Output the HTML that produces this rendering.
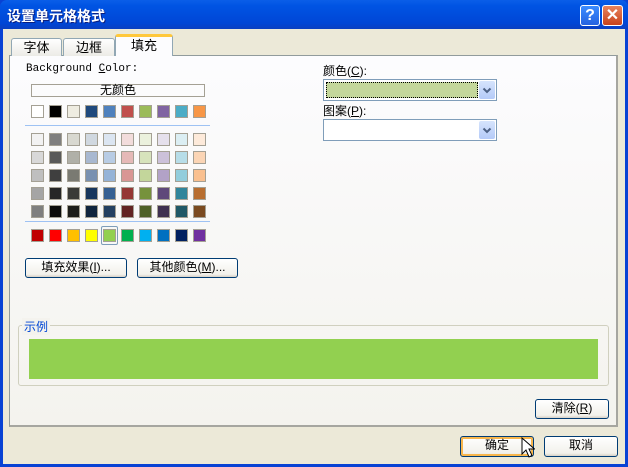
<!DOCTYPE html><html><head><meta charset="utf-8"><style>
*{margin:0;padding:0;box-sizing:border-box}
body{width:628px;height:467px;position:relative;overflow:hidden;font-family:"Liberation Sans","Noto Sans CJK SC","WenQuanYi Zen Hei",sans-serif;font-size:12px;color:#000;background:#0842d4}
.a{position:absolute}
.win{left:3px;top:29px;width:622px;height:435px;background:#ECE9D8}
.title{left:0;top:0;width:628px;height:29px;background:linear-gradient(#0a5ee8,#0054e3 20%,#0046d6 80%,#0a3fc0);border-radius:7px 7px 0 0}
.tab{border:1px solid #91A7B4;border-bottom:none;border-radius:3px 3px 0 0;background:linear-gradient(#fff,#ECEBE6);text-align:center;font-size:13px;line-height:17px}
.panel{left:9px;top:55px;width:609px;height:372px;border:1px solid #919B9C;border-right:2px solid #a6a6a0;border-bottom:2px solid #a6a6a0;background:linear-gradient(#FCFCFE,#F4F3EE)}
.sw{width:13px;height:13px;border:1px solid #a4a094}
.btn{border:1px solid #003C74;border-radius:3px;background:linear-gradient(#fff,#F2F1EB 85%,#D6D0C5);text-align:center;font-size:12px;line-height:17px}
.combo{border:1px solid #7F9DB9;background:#fff}
.dd{width:16px;height:18px;right:1px;top:1px;background:linear-gradient(#D6E4FC,#B4CAF8);border-radius:2px}
.sep{height:1px;background:#9EC2F3}
</style></head><body>
<div class="a title"></div>
<div class="a" style="left:7px;top:6px;color:#fff;font-weight:bold;font-size:14px;text-shadow:1px 1px #0a1e80">设置单元格格式</div>
<div class="a" style="left:580px;top:5px;width:20px;height:21px;border:1px solid #fff;border-radius:3px;background:linear-gradient(#3c8cff,#2663e0);color:#fff;font-weight:bold;font-size:16px;text-align:center;line-height:19px">?</div>
<div class="a" style="left:602px;top:5px;width:21px;height:21px;border:1px solid #fff;border-radius:3px;background:linear-gradient(#e9835e,#c8421a);color:#fff;font-weight:bold;font-size:16px;text-align:center;line-height:19px">✕</div>
<div class="a win"></div>
<div class="a panel"></div>
<div class="a tab" style="left:11px;top:38px;width:51px;height:18px">字体</div>
<div class="a tab" style="left:63px;top:38px;width:52px;height:18px">边框</div>
<div class="a tab" style="left:115px;top:34px;width:58px;height:22px;background:#FCFCFE;border-top:3px solid #FFC83C;line-height:18px">填充</div>
<div class="a" style="left:26px;top:63px;font-family:'Liberation Mono',monospace;font-size:11px">Background <u>C</u>olor:</div>
<div class="a" style="left:31px;top:84px;width:174px;height:13px;border:1px solid #a4a094;text-align:center;font-size:12px;line-height:11px">无颜色</div>
<div id="g"></div>
<div class="a sep" style="left:25px;top:125px;width:185px"></div>
<div class="a sep" style="left:25px;top:221px;width:185px"></div>
<div class="a btn" style="left:25px;top:258px;width:102px;height:20px">填充效果(<u>I</u>)...</div>
<div class="a btn" style="left:137px;top:258px;width:101px;height:20px">其他颜色(<u>M</u>)...</div>
<div class="a" style="left:323px;top:62px">颜色(<u>C</u>):</div>
<div class="a combo" style="left:323px;top:79px;width:174px;height:22px"><div class="a" style="left:2px;top:2px;width:152px;height:16px;border:1px dotted #000;background:#C4D79B"></div><div class="a dd"><svg width="16" height="18"><path d="M4.5 7.5l3.5 3.5l3.5-3.5" stroke="#4D6185" stroke-width="2" fill="none"/></svg></div></div>
<div class="a" style="left:323px;top:102px">图案(<u>P</u>):</div>
<div class="a combo" style="left:323px;top:119px;width:174px;height:22px"><div class="a dd"><svg width="16" height="18"><path d="M4.5 7.5l3.5 3.5l3.5-3.5" stroke="#4D6185" stroke-width="2" fill="none"/></svg></div></div>
<div class="a" style="left:18px;top:325px;width:591px;height:61px;border:1px solid #D0D0BF;border-radius:3px"></div>
<div class="a" style="left:22px;top:318px;padding:0 2px;color:#0046D5;background:#F4F3EE">示例</div>
<div class="a" style="left:29px;top:339px;width:569px;height:40px;background:#92D050"></div>
<div class="a btn" style="left:535px;top:399px;width:74px;height:20px">清除(<u>R</u>)</div>
<div class="a btn" style="left:460px;top:436px;width:74px;height:21px;box-shadow:inset 0 0 0 2px #F8B64C">确定</div>
<div class="a btn" style="left:544px;top:436px;width:74px;height:21px">取消</div>
<svg class="a" style="left:521px;top:437px" width="14" height="22"><path d="M1 1v16l4-4l3 7l3-1.5l-3-6.5h5.5z" fill="#fff" stroke="#000" stroke-width="1"/></svg>
<script>
var rows=[[31,105,["#fff","#000","#EEECE1","#1F497D","#4F81BD","#C0504D","#9BBB59","#8064A2","#4BACC6","#F79646"]],
[31,133,["#F2F2F2","#7F7F7F","#D8D8D0","#D0D8E0","#DBE5F1","#F2DCDB","#EBF1DD","#E5E0EC","#DBEEF3","#FDEADA"]],
[31,151,["#D8D8D8","#595959","#B0B0A8","#A8B8D0","#B8CCE4","#E5B9B7","#D7E3BC","#CCC1D9","#B7DDE8","#FBD5B5"]],
[31,169,["#BFBFBF","#3F3F3F","#7A7A72","#7890B0","#95B3D7","#D99694","#C3D69B","#B2A2C7","#92CDDC","#FAC08F"]],
[31,187,["#A5A5A5","#262626","#3A3A36","#17365D","#366092","#953734","#76923C","#5F497A","#31859B","#B86E30"]],
[31,205,["#7F7F7F","#0C0C0C","#1D1D1A","#0F243E","#244061","#632423","#4F6128","#3F3151","#205867","#7A4A20"]],
[31,229,["#C00000","#FF0000","#FFC000","#FFFF00","#92D050","#00B050","#00B0F0","#0070C0","#002060","#7030A0"]]];
var h="";rows.forEach(function(r){r[2].forEach(function(c,i){h+='<div class="a sw" style="left:'+(r[0]+i*18)+'px;top:'+r[1]+'px;background:'+c+'"></div>'})});
h+='<div class="a" style="left:101px;top:226px;width:17px;height:19px;border:1px solid #7E9DB9;border-radius:2px"></div>';
document.getElementById("g").innerHTML=h;
</script>
</body></html>
